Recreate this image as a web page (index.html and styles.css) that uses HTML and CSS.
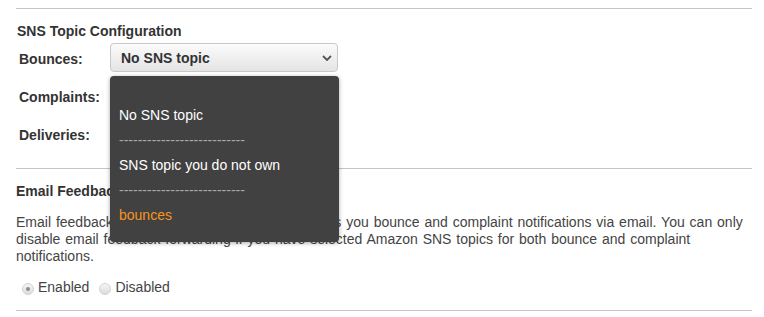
FILE: index.html
```html
<!DOCTYPE html>
<html lang="en">
<head>
  <meta charset="UTF-8">
  <title>SNS Topic Configuration</title>
  <link rel="stylesheet" href="styles.css">
</head>
<body>
  <div class="page">
    <div class="section sns">
      <div class="section-title">SNS Topic Configuration</div>
      <div class="row">
        <div class="label">Bounces:</div>
        <div class="select">
          <span>No SNS topic</span>
          <svg class="chevron" width="10" height="6" viewBox="0 0 10 6">
            <path d="M1 1 L5 5 L9 1" fill="none" stroke="#555" stroke-width="1.8"/>
          </svg>
        </div>
      </div>
      <div class="row">
        <div class="label">Complaints:</div>
      </div>
      <div class="row">
        <div class="label">Deliveries:</div>
      </div>

      <!-- open menu of the Bounces select -->
      <ul class="dropdown">
        <li></li>
        <li>No SNS topic</li>
        <li class="sep">---------------------------</li>
        <li>SNS topic you do not own</li>
        <li class="sep">---------------------------</li>
        <li class="selected">bounces</li>
      </ul>
    </div>

    <div class="section feedback">
      <div class="section-title">Email Feedback Forwarding</div>
      <p>Email feedback forwarding is the feature that sends you bounce and complaint notifications via email. You can only disable email feedback forwarding if you have selected Amazon SNS topics for both bounce and complaint notifications.</p>
      <div class="radios">
        <label><span class="radio checked"></span>Enabled</label>
        <label><span class="radio"></span>Disabled</label>
      </div>
    </div>
  </div>
</body>
</html>
```

FILE: styles.css
```css
body {
  margin: 0;
  font-family: "Liberation Sans", Arial, sans-serif;
  color: #333;
  background: #fff;
}
.page {
  width: 736px;
  margin-left: 16px;
  padding-top: 8px;
}
.page::after {
  content: "";
  display: block;
  border-top: 1px solid #c4c4c4;
}
.section {
  border-top: 1px solid #c4c4c4;
  position: relative;
}
.sns {
  padding: 14px 0 20px 1px;
}
.section-title {
  font-size: 14px;
  font-weight: bold;
  line-height: 16px;
  color: #333;
}
.row {
  display: flex;
  align-items: center;
  height: 29px;
  margin-top: 9px;
}
.sns .section-title + .row {
  margin-top: 4px;
}
.label {
  width: 91px;
  padding: 3px 0 0 2px;
  font-size: 14px;
  font-weight: bold;
  color: #333;
}
.select {
  width: 211px;
  height: 27px;
  border: 1px solid #c8c8c8;
  border-radius: 4px;
  background: linear-gradient(#fbfbfb, #e4e4e4);
  display: flex;
  align-items: center;
  justify-content: space-between;
  padding: 0 5px 0 10px;
  font-size: 14px;
  font-weight: bold;
  color: #333;
}
.chevron {
  margin-top: 1px;
}
.dropdown {
  position: absolute;
  z-index: 2;
  top: 67px;
  left: 94px;
  width: 229px;
  height: 166px;
  margin: 0;
  padding: 2px 0 0;
  list-style: none;
  background: #414141;
  border-radius: 4px;
  box-shadow: 0 1px 4px rgba(0, 0, 0, 0.35);
  box-sizing: border-box;
}
.dropdown li {
  height: 25px;
  line-height: 25px;
  padding-left: 9px;
  font-size: 14px;
  color: #fff;
  white-space: nowrap;
  overflow: hidden;
}
.dropdown li.sep {
  color: #a8a8a8;
}
.dropdown li.selected {
  color: #f7941d;
}
.feedback {
  padding: 14px 0 14px;
}
.feedback p {
  margin: 15px 0 0;
  font-size: 14px;
  line-height: 17px;
  word-spacing: 1px;
  color: #444;
}
.radios {
  display: flex;
  gap: 10px;
  margin-top: 14px;
  padding-left: 6px;
  font-size: 14px;
  line-height: 17px;
  color: #444;
}
.radios label {
  display: flex;
  align-items: center;
}
.radio {
  box-sizing: border-box;
  width: 12px;
  height: 12px;
  margin: 2px 4px 0 0;
  border: 1px solid #d2d2d2;
  border-radius: 50%;
  background: linear-gradient(#f6f6f6, #dcdcdc);
  position: relative;
}
.radio.checked::after {
  content: "";
  position: absolute;
  left: 3px;
  top: 3px;
  width: 4px;
  height: 4px;
  border-radius: 50%;
  background: #8c8c8c;
}
```
